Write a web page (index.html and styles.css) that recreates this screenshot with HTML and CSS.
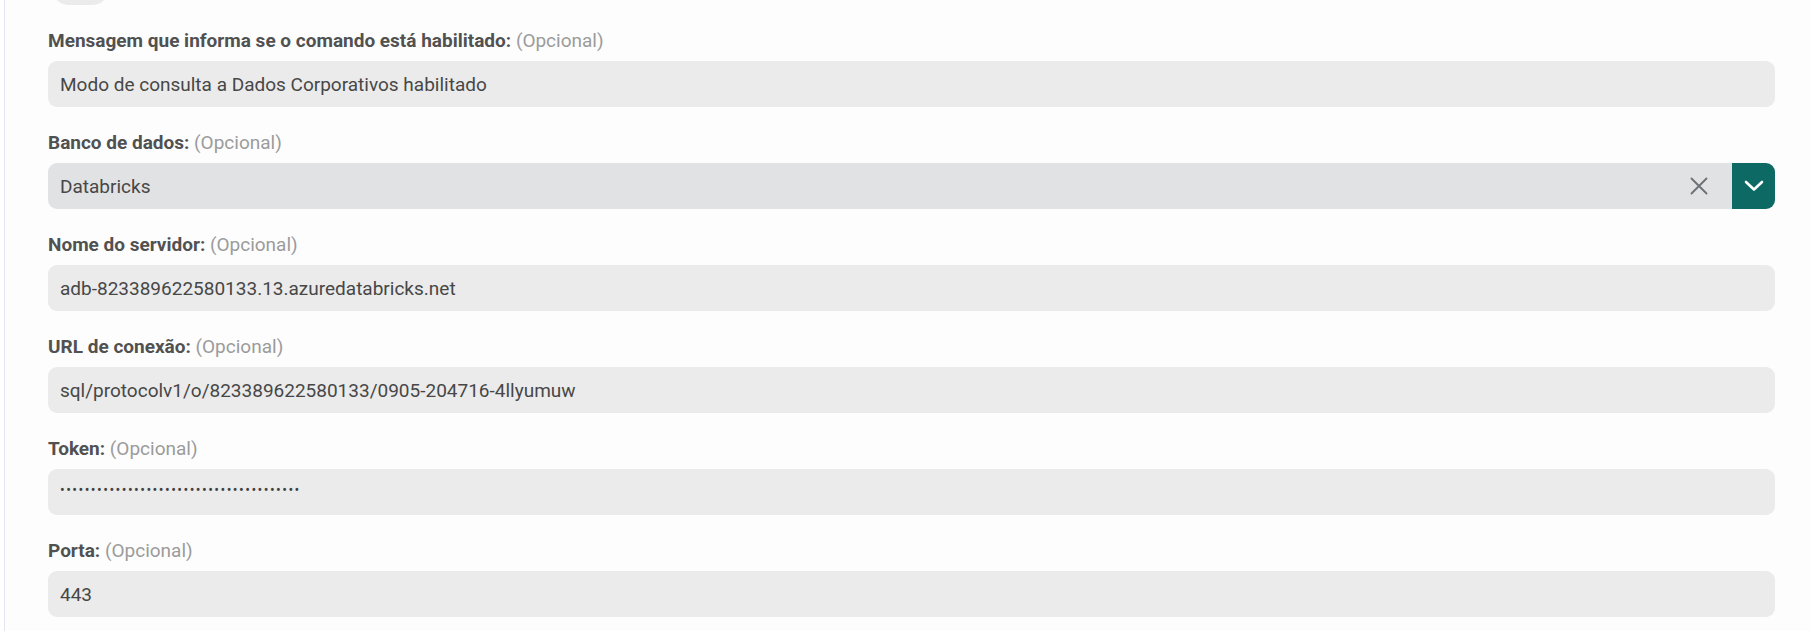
FILE: index.html
```html
<!DOCTYPE html>
<html lang="pt-BR">
<head>
<meta charset="utf-8">
<title>Configuração</title>
<link rel="stylesheet" href="styles.css">
</head>
<body>
<div class="shell">
  <div class="panel">
    <div class="toggle-tail"></div>

    <div class="field">
      <div class="label"><b>Mensagem que informa se o comando está habilitado:</b> <span class="opt">(Opcional)</span></div>
      <div class="input">Modo de consulta a Dados Corporativos habilitado</div>
    </div>

    <div class="field">
      <div class="label"><b>Banco de dados:</b> <span class="opt">(Opcional)</span></div>
      <div class="select">
        <div class="select-box">
          <span class="select-value">Databricks</span>
          <svg class="clear" width="18" height="18" viewBox="0 0 18 18"><path d="M1.5 1.5 L16.5 16.5 M16.5 1.5 L1.5 16.5" stroke="#6d7277" stroke-width="1.9" fill="none" stroke-linecap="round"/></svg>
        </div>
        <div class="select-btn">
          <svg width="20" height="12" viewBox="0 0 20 12"><path d="M2 2 L10 9.5 L18 2" stroke="#ffffff" stroke-width="2.6" fill="none" stroke-linecap="round" stroke-linejoin="round"/></svg>
        </div>
      </div>
    </div>

    <div class="field">
      <div class="label"><b>Nome do servidor:</b> <span class="opt">(Opcional)</span></div>
      <div class="input">adb-823389622580133.13.azuredatabricks.net</div>
    </div>

    <div class="field">
      <div class="label"><b>URL de conexão:</b> <span class="opt">(Opcional)</span></div>
      <div class="input">sql/protocolv1/o/823389622580133/0905-204716-4llyumuw</div>
    </div>

    <div class="field">
      <div class="label"><b>Token:</b> <span class="opt">(Opcional)</span></div>
      <div class="input"><span class="dots">•••••••••••••••••••••••••••••••••••••••</span></div>
    </div>

    <div class="field">
      <div class="label"><b>Porta:</b> <span class="opt">(Opcional)</span></div>
      <div class="input">443</div>
    </div>
  </div>
</div>
</body>
</html>
```
FILE: styles.css
```css
html, body {
  margin: 0;
  padding: 0;
  background: #ffffff;
  height: 100%;
  overflow: hidden;
}

body {
  font-family: Roboto, "Liberation Sans", sans-serif;
  font-size: 19px;
  color: #4a4a4a;
}

.shell {
  padding-left: 4px;
  height: 100%;
}

.panel {
  border-left: 1px solid #e5e5ef;
  background: #fdfdfd;
  padding: 0 35px 0 43px;
  height: 100%;
  display: flex;
  flex-direction: column;
  gap: 25px;
}

.toggle-tail {
  width: 55px;
  height: 30px;
  margin-top: -25px;
  margin-left: 5px;
  border-radius: 15px;
  background: #ebebeb;
  flex: none;
}

.field {
  display: flex;
  flex-direction: column;
  gap: 9px;
}

.label {
  line-height: 22px;
  height: 22px;
  white-space: nowrap;
}

.label b {
  font-weight: 700;
  color: #515151;
}

.opt {
  color: #9b9b9b;
  font-weight: 400;
}

.input {
  height: 46px;
  box-sizing: border-box;
  background: #ebebeb;
  border-radius: 9px;
  padding: 0 12px;
  display: flex;
  align-items: center;
  color: #474747;
  white-space: nowrap;
}

.dots {
  font-size: 14px;
  letter-spacing: 1.45px;
  color: #3f3f3f;
  margin-bottom: 4px;
}

.select {
  height: 46px;
  display: flex;
}

.select-box {
  flex: 1;
  background: #e1e2e4;
  border-radius: 9px 0 0 9px;
  padding: 0 24px 0 12px;
  display: flex;
  align-items: center;
  justify-content: space-between;
  color: #474747;
}

.clear {
  display: block;
}

.select-btn {
  width: 43px;
  background: #0c6964;
  border-radius: 0 9px 9px 0;
  display: flex;
  align-items: center;
  justify-content: center;
}

.select-btn svg {
  display: block;
}
```
